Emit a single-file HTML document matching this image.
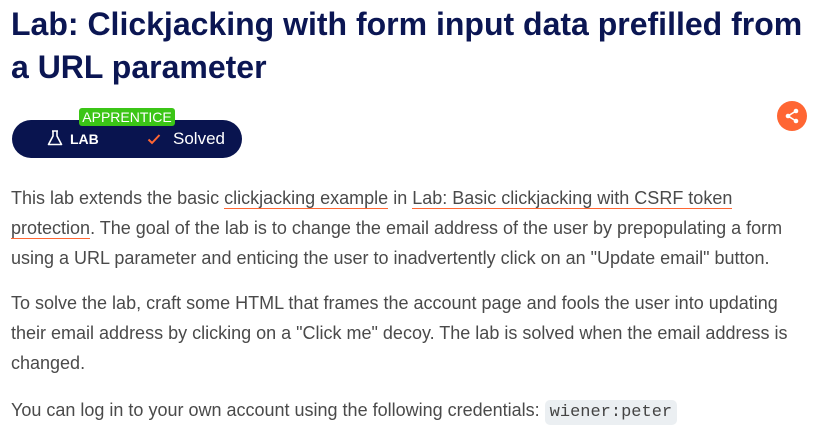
<!DOCTYPE html>
<html><head><meta charset="utf-8"><style>
body{margin:0;background:#fff;font-family:"Liberation Sans",sans-serif;width:814px;height:435px;overflow:hidden;position:relative}
h1{position:absolute;left:11px;top:3px;margin:0;font-size:32px;line-height:43px;color:#0b1653;font-weight:bold;width:800px}
.pill{position:absolute;left:12px;top:120px;width:230px;height:38px;border-radius:19px;background:#09144f}
.app{position:absolute;left:79px;top:108px;width:96px;height:18px;background:#3bc516;border-radius:3px;color:#fff;font-size:14px;line-height:18px;text-align:center}
.lab{position:absolute;left:70px;top:131px;color:#fff;font-weight:bold;font-size:14px}
.sol{position:absolute;left:173px;top:129px;color:#fff;font-size:17px}
.share{position:absolute;left:777px;top:101px;width:30px;height:30px;border-radius:50%;background:#ff6633}
p{position:absolute;left:11px;margin:0;font-size:18px;line-height:30px;color:#4a4a4a;width:790px}
a{color:#4a4a4a;text-decoration:none;border-bottom:1.5px solid #ff6633}
code{font-family:"Liberation Mono",monospace;background:#ebeff2;border-radius:5px;padding:3px 5px;font-size:17px;color:#444}
</style></head><body>
<h1>Lab: Clickjacking with form input data prefilled from a URL parameter</h1>
<div class="pill"></div>
<svg style="position:absolute;left:46px;top:129px" width="18" height="18" viewBox="0 0 18 18"><path d="M6 2h6M7 2v5L2.5 15.5h13L11 7V2" fill="none" stroke="#fff" stroke-width="1.6" stroke-linejoin="round"/></svg>
<div class="lab">LAB</div>
<svg style="position:absolute;left:147px;top:133px" width="14" height="12" viewBox="0 0 14 12"><path d="M1.5 6.5l3.5 3.5 7.5-8" fill="none" stroke="#ff6633" stroke-width="2"/></svg>
<div class="sol">Solved</div>
<div class="app">APPRENTICE</div>
<div class="share"><svg width="30" height="30" viewBox="0 0 30 30"><circle cx="19" cy="10" r="2.3" fill="#fff"/><circle cx="11" cy="15" r="2.3" fill="#fff"/><circle cx="19" cy="20" r="2.3" fill="#fff"/><path d="M19 10L11 15L19 20" stroke="#fff" stroke-width="1.6" fill="none"/></svg></div>
<p style="top:183px">This lab extends the basic <a>clickjacking example</a> in <a>Lab: Basic clickjacking with CSRF token protection</a>. The goal of the lab is to change the email address of the user by prepopulating a form using a URL parameter and enticing the user to inadvertently click on an "Update email" button.</p>
<p style="top:288px">To solve the lab, craft some HTML that frames the account page and fools the user into updating their email address by clicking on a "Click me" decoy. The lab is solved when the email address is changed.</p>
<p style="top:395px">You can log in to your own account using the following credentials: <code>wiener:peter</code></p>
</body></html>
